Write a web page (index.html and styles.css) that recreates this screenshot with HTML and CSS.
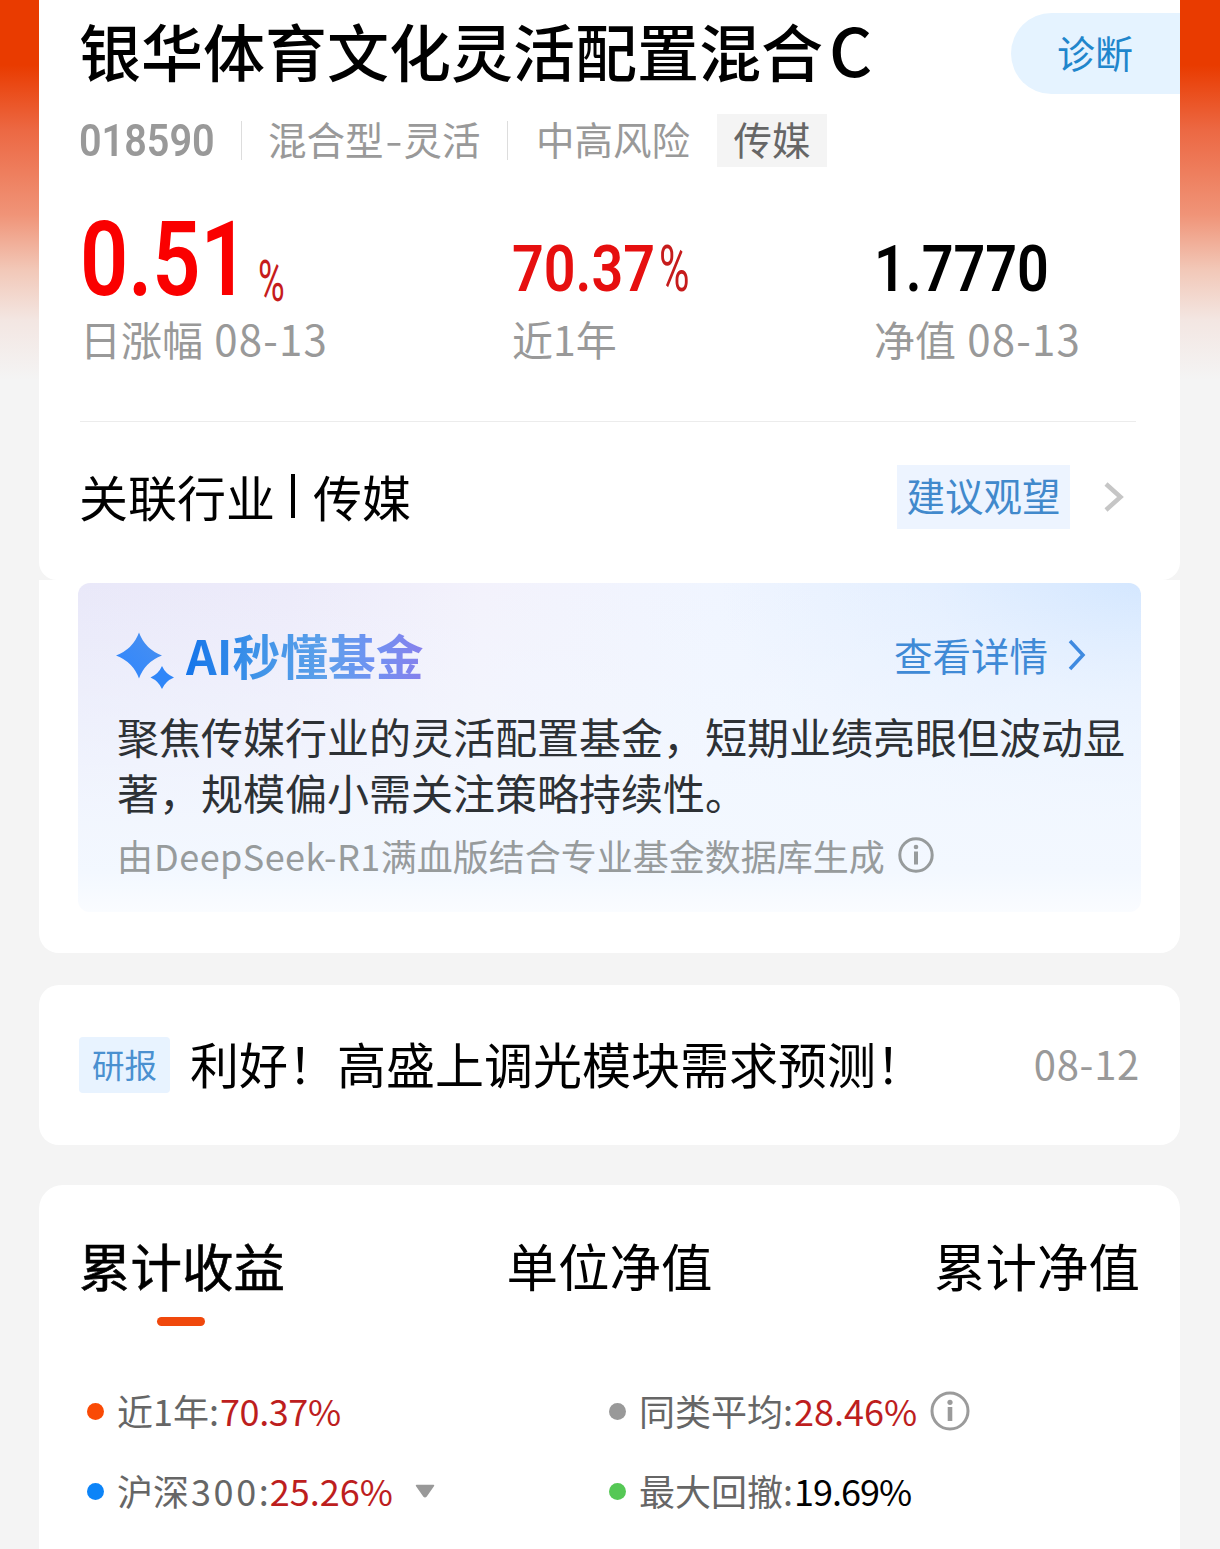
FILE: index.html
```html
<!DOCTYPE html>
<html lang="zh-CN">
<head>
<meta charset="utf-8">
<title>银华体育文化灵活配置混合C</title>
<link rel="stylesheet" href="styles.css">
</head>
<body>
<main class="page">
  <section class="summary">
    <header class="title-row">
      <h1 class="title">银华体育文化灵活配置混合<span class="share-class">C</span></h1>
      <a class="diagnose">诊断</a>
    </header>
    <div class="meta">
      <span class="code"><span class="code-text">018590</span></span>
      <span class="meta-item type">混合型<span class="dash">-</span>灵活</span>
      <span class="meta-item risk">中高风险</span>
      <span class="sector">传媒</span>
    </div>
    <div class="stats">
      <div class="stat stat-day">
        <div class="figure"><span class="num num-day">0.51</span><span class="pct pct-day">%</span></div>
        <div class="label">日涨幅 <span class="digits">08-13</span></div>
      </div>
      <div class="stat stat-year">
        <div class="figure"><span class="num num-year">70.37</span><span class="pct pct-year">%</span></div>
        <div class="label">近1年</div>
      </div>
      <div class="stat stat-nav">
        <div class="figure"><span class="num num-nav">1.7770</span></div>
        <div class="label">净值 <span class="digits">08-13</span></div>
      </div>
    </div>
    <div class="industry">
      <span class="industry-name">关联行业<i class="bar"></i>传媒</span>
      <span class="advice">建议观望</span>
      <svg class="chevron" width="22" height="34" viewBox="0 0 22 34"><path d="M3 4 L17.500 17 L3 30" fill="none" stroke="#c6c6c6" stroke-width="4.500"/></svg>
    </div>
  </section>

  <section class="insight">
    <div class="panel">
      <div class="panel-head">
        <svg class="sparkle" width="60" height="58" viewBox="0 0 60 58">
          <defs><linearGradient id="spark" x1="0" y1="1" x2="1" y2="0"><stop offset="0" stop-color="#2f86ff"/><stop offset="1" stop-color="#4a90ee"/></linearGradient></defs>
          <path d="M23 0.500 Q29 17 46 23.500 Q29 30 23 46.500 Q17 30 0 23.500 Q17 17 23 0.500Z" fill="url(#spark)"/>
          <path d="M46 34 Q49.500 42 58 45.500 Q49.500 49 46 57 Q42.500 49 34.500 45.500 Q42.500 42 46 34Z" fill="#2f86f8"/>
        </svg>
        <h2 class="panel-title">AI秒懂基金</h2>
        <a class="detail">查看详情</a>
        <svg class="chevron-blue" width="20" height="34" viewBox="0 0 20 34"><path d="M3 3 L16 17 L3 31" fill="none" stroke="#3f8ae0" stroke-width="3.500"/></svg>
      </div>
      <p class="panel-text">聚焦传媒行业的灵活配置基金，短期业绩亮眼但波动显著，规模偏小需关注策略持续性。</p>
      <div class="source">
        <span>由<span class="model">DeepSeek-R1</span>满血版结合专业基金数据库生成</span>
        <svg class="info" width="36" height="36" viewBox="0 0 36 36"><circle cx="18" cy="18" r="16.200" fill="none" stroke="#979b9c" stroke-width="3"/><circle cx="18" cy="10" r="2.300" fill="#979b9c"/><path d="M18 14.500V27.500" stroke="#979b9c" stroke-width="4"/></svg>
      </div>
    </div>
  </section>

  <section class="news">
    <span class="news-tag">研报</span>
    <span class="news-title">利好！高盛上调光模块需求预测！</span>
    <time class="news-date">08-12</time>
  </section>

  <section class="returns">
    <nav class="tabs">
      <span class="tab active">累计收益</span>
      <span class="tab">单位净值</span>
      <span class="tab">累计净值</span>
    </nav>
    <div class="legend">
      <div class="entry"><i class="dot orange"></i><span>近1年:</span><b class="value red year">70.37%</b></div>
      <div class="entry"><i class="dot gray"></i><span>同类平均:</span><b class="value red">28.46%</b>
        <svg class="info-large" width="40" height="40" viewBox="0 0 40 40"><circle cx="20" cy="20" r="18" fill="none" stroke="#9b9b9b" stroke-width="3"/><circle cx="20" cy="11.300" r="2.600" fill="#9b9b9b"/><path d="M20 16V30" stroke="#9b9b9b" stroke-width="4.600"/></svg>
      </div>
      <div class="entry"><i class="dot blue"></i><span>沪深<span class="index-digits">300</span>:</span><b class="value red">25.26%</b>
        <svg class="caret" width="20" height="14" viewBox="0 0 20 14"><path d="M1.500 1.500H18.500L11 12.300Q10 13.400 9 12.300Z" fill="#999" stroke="#999" stroke-width="1.500" stroke-linejoin="round"/></svg>
      </div>
      <div class="entry"><i class="dot green"></i><span>最大回撤:</span><b class="value drawdown">19.69%</b></div>
    </div>
  </section>
</main>
</body>
</html>
```
FILE: styles.css
```css
* { box-sizing: border-box; }

body {
  margin: 0;
  background: #f4f4f4 linear-gradient(180deg, #e93b00 0, #e93b00 65px, #ec6843 130px, #f09478 215px, #f2c8b8 270px, #f3e6e2 320px, #f4f4f4 380px) no-repeat 0 0 / 100% 380px;
  font-family: "Noto Sans CJK SC", "Noto Sans", sans-serif;
  color: #000;
  white-space: nowrap;
}

h1, h2, p { margin: 0; }

.page {
  width: 1141px;
  height: 1549px;
  margin-left: 39px;
  display: flex;
  flex-direction: column;
  overflow: hidden;
}

/* Fund summary */
.summary {
  height: 580px;
  background: #fff;
  border-radius: 0 0 18px 18px;
  flex: none;
}

.title-row {
  display: flex;
  justify-content: space-between;
  height: 108px;
  padding: 13px 0 0 40px;
}

.title {
  font-size: 62px;
  font-weight: 500;
  line-height: 75px;
}

.share-class { margin-left: 6px; font-size: 67px; line-height: 0; }

.diagnose {
  width: 169px;
  height: 81px;
  padding-left: 46px;
  border-radius: 41px 0 0 41px;
  background: #e5f3ff;
  color: #1f86cc;
  font-size: 38px;
  line-height: 77px;
}

.meta {
  display: flex;
  align-items: center;
  height: 64px;
  padding-left: 40px;
  color: #999;
  font-size: 38.500px;
  line-height: 47px;
}

.code { width: 162px; height: 50px; }

.code-text {
  display: inline-block;
  font: 600 45px/52px Roboto, sans-serif;
  transform: scaleX(.88);
  transform-origin: 0 0;
}

.meta-item {
  position: relative;
  height: 50px;
  padding-left: 27px;
}

.meta-item::before {
  content: "";
  position: absolute;
  left: 0;
  top: 6px;
  width: 1px;
  height: 39px;
  background: #ddd;
}

.type { width: 266px; }
.risk { width: 210px; padding-left: 29px; }
.dash { display: inline-block; width: 20px; text-align: center; transform: scaleX(1.3); }

.sector {
  width: 110px;
  height: 53px;
  background: #f4f4f4;
  color: #666;
  text-align: center;
  line-height: 48px;
}

.stats {
  display: flex;
  height: 250px;
  margin: 0 44px 0 41px;
  border-bottom: 1px solid #ececec;
}

.stat-day { width: 432px; }
.stat-year { width: 362px; }

.figure {
  display: flex;
  align-items: baseline;
  height: 140px;
  padding-top: 36px;
  font-family: Roboto, sans-serif;
  line-height: 104px;
}

.num, .pct {
  display: block;
  transform-origin: 0 50%;
}

.num { font-weight: 600; }
.num-day { width: 178px; font-size: 103px; color: #fa0000; transform: scaleX(.82); }
.pct-day { font-size: 57px; line-height: 60px; color: #c61c1c; transform: translateY(6px) scaleX(.64); }
.stat-year .figure, .stat-nav .figure { padding-top: 58px; line-height: 80px; }
.num-year { width: 147px; font-size: 64px; color: #e60f0f; transform: scaleX(.87); }
.pct-year { font-size: 64px; color: #c61c1c; transform: scaleX(.65); }
.num-nav { font-size: 64px; transform: scaleX(.87); }

.label {
  color: #999;
  font-size: 41px;
  line-height: 53px;
}

.digits { margin-left: 2px; font-size: 42px; letter-spacing: 1.200px; line-height: 0; }

.industry {
  display: flex;
  align-items: center;
  height: 150px;
  padding: 0 55px 0 40px;
}

.industry-name {
  display: flex;
  align-items: center;
  height: 60px;
  margin-right: auto;
  font-size: 49px;
  line-height: 56px;
}

.bar {
  width: 4px;
  height: 44px;
  margin: 0 18px 0 16px;
  background: #000;
}

.advice {
  width: 173px;
  height: 64px;
  background: #edf4ff;
  color: #4189cc;
  font-size: 38.500px;
  line-height: 59px;
  text-align: center;
}

.chevron { margin-left: 33px; }

.industry-name { padding-bottom: 3px; }

/* AI summary */
.insight {
  height: 373px;
  flex: none;
  padding: 3px 39px 0;
  background: #fff;
  border-radius: 0 0 20px 20px;
}

.panel {
  height: 329px;
  padding: 34px 10px 0 39px;
  border-radius: 12px;
  background:
    linear-gradient(180deg, rgba(247, 251, 255, 0) 0%, rgba(243, 248, 255, .85) 70%, #f3f8ff 88%, #fafcff 100%),
    radial-gradient(ellipse 420px 240px at 100% 0, #d4e7ff 0%, rgba(226, 238, 255, .7) 50%, rgba(240, 246, 255, 0) 100%),
    linear-gradient(90deg, #e9e8f9 0%, #edebfa 20%, #f3f2fc 38%, #f0f5ff 60%, #e8f1ff 100%);
}

.panel-head {
  display: flex;
  align-items: center;
  height: 76px;
}

.sparkle { margin: 12px 10px 0 -1px; }

.panel-title {
  margin-right: auto;
  font-size: 47.800px;
  font-weight: 700;
  line-height: 70px;
  background: linear-gradient(90deg, #1575ea 0%, #3f93e8 30%, #5da0ea 58%, #6f92f2 78%, #8780ec 100%);
  -webkit-background-clip: text;
  background-clip: text;
  color: transparent;
}

.detail { color: #3f8ad6; font-size: 38.500px; line-height: 68px; height: 70px; }
.chevron-blue { margin: 0 44px 0 19px; }

.panel-text {
  width: 1012px;
  padding-top: 15px;
  color: #2d3135;
  font-size: 42px;
  line-height: 56px;
  white-space: normal;
}

.source {
  display: flex;
  align-items: center;
  gap: 13px;
  height: 69px;
  color: #979b9c;
  font-size: 36px;
  line-height: 50px;
}

.model { margin-left: 1px; letter-spacing: .450px; }

/* Research note */
.news {
  display: flex;
  align-items: center;
  flex: none;
  height: 160px;
  margin-top: 32px;
  padding: 0 40px;
  border-radius: 20px;
  background: #fff;
}

.news-tag {
  width: 91px;
  height: 56px;
  border-radius: 4px;
  background: #e8f3ff;
  color: #4a90d0;
  font-size: 32.500px;
  line-height: 53px;
  text-align: center;
}

.news-title {
  height: 60px;
  margin: 0 auto 0 20px;
  font-size: 49px;
  line-height: 56px;
}

.news-date { height: 60px; color: #999; font-size: 40px; letter-spacing: .7px; line-height: 57px; }

/* Returns */
.returns {
  flex: 1;
  margin-top: 40px;
  padding: 45px 40px 0;
  border-radius: 24px 24px 0 0;
  background: #fff;
}

.tabs { display: flex; justify-content: space-between; }

.tab {
  position: relative;
  font-size: 51.500px;
  line-height: 70px;
}

.active { -webkit-text-stroke: .6px #000; }

.active::after {
  content: "";
  position: absolute;
  left: 78px;
  top: 87px;
  width: 48px;
  height: 9px;
  border-radius: 5px;
  background: #f0480c;
}

.legend {
  display: grid;
  grid-template-columns: 522px 1fr;
  grid-auto-rows: 80px;
  padding: 71px 0 0 8px;
}

.entry {
  display: flex;
  align-items: center;
  color: #666;
  font-size: 36px;
  line-height: 50px;
}

.entry > span, .value { height: 52px; }

.dot {
  width: 17px;
  height: 17px;
  margin-right: 13px;
  border-radius: 50%;
}

.orange { background: #fa4a05; }
.gray { background: #999; }
.blue { background: #0c84f8; }
.green { background: #55c855; }

.value { margin-left: 1px; color: #000; font-weight: 400; }
.red { color: #bd1e1e; }
.year { letter-spacing: -.4px; }
.drawdown { letter-spacing: -1px; }
.index-digits { margin-left: 2px; letter-spacing: 2.600px; }
.info-large { margin-left: 13px; }
.caret { margin-left: 22px; }
```
